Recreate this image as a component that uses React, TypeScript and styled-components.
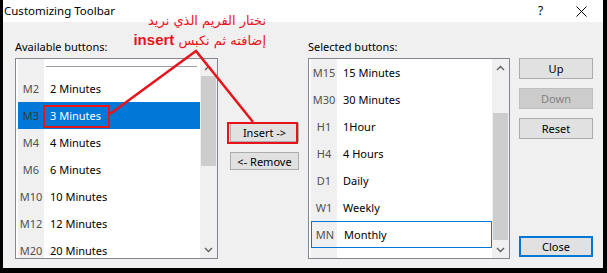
import styled, { createGlobalStyle } from "styled-components";

const GlobalStyle = createGlobalStyle`
  html, body {
    margin: 0;
    padding: 0;
    background: #000;
  }
  body {
    font-family: "Noto Sans", "Liberation Sans", sans-serif;
    font-size: 11px;
    color: #000;
  }
`;

// Window frame
const Frame = styled.div`
  position: relative;
  width: 607px;
  height: 273px;
  box-sizing: border-box;
  padding: 0 4px 5px 3px;
  background: #000;
  display: flex;
  flex-direction: column;
  overflow: hidden;
`;

const TitleBar = styled.div`
  height: 22px;
  flex: none;
  background: #fff;
  display: flex;
  align-items: center;
  padding-left: 1px;
  font-size: 11.5px;
`;

const Title = styled.span`
  flex: 1;
  padding-bottom: 2px;
`;

const Help = styled.span`
  width: 32px;
  font-size: 12px;
  padding-bottom: 2px;
`;

const CloseX = styled.div`
  width: 22px;
  height: 22px;
  margin-right: 11px;
  display: flex;
  align-items: center;
  justify-content: center;
`;

const Body = styled.div`
  flex: 1;
  background: #f0f0f0;
  display: grid;
  grid-template-columns: 203px 72px 202px 74px;
  grid-template-rows: 20px 201px;
  column-gap: 9px;
  padding: 16px 10px 0 12px;
`;

const Label = styled.div<{ $col: number }>`
  grid-column: ${(p) => p.$col};
  grid-row: 1;
  padding-top: 1px;
  line-height: 15px;
`;

// List box
const ListBox = styled.div<{ $col: number }>`
  grid-column: ${(p) => p.$col};
  grid-row: 2;
  border: 1px solid #828790;
  background: #fff;
  display: flex;
  overflow: hidden;
`;

const Viewport = styled.div`
  flex: 1;
  overflow: hidden;
  padding-left: 2px;
  background: linear-gradient(to right, #fff 2px, #f0f0f0 2px, #f0f0f0 28px, #fff 28px);
`;

const Row = styled.div<{ $selected?: boolean; $focused?: boolean }>`
  height: 27px;
  box-sizing: border-box;
  display: grid;
  grid-template-columns: 26px 1fr;
  align-items: center;
  background: ${(p) => (p.$selected ? "#0078d7" : "transparent")};
  border: ${(p) => (p.$focused ? "1px solid #0078d7" : "0")};
`;

const Code = styled.span<{ $selected?: boolean }>`
  text-align: center;
  color: ${(p) => (p.$selected ? "#3a3a3a" : "#505050")};
`;

const Name = styled.span<{ $selected?: boolean }>`
  padding-left: 6px;
  color: ${(p) => (p.$selected ? "#fff" : "#000")};
`;

const SeparatorRow = styled.div`
  height: 16px;
  display: grid;
  grid-template-columns: 26px 1fr;
`;

const SeparatorLine = styled.div`
  margin: 7px 3px 0 2px;
  height: 1px;
  background: #a0a0a0;
`;

const ScrollBar = styled.div`
  width: 17px;
  flex: none;
  background: #f0f0f0;
  display: flex;
  flex-direction: column;
`;

const ArrowBox = styled.div`
  height: 17px;
  flex: none;
  display: flex;
  align-items: center;
  justify-content: center;
`;

const Track = styled.div`
  flex: 1;
  display: flex;
  flex-direction: column;
`;

const Thumb = styled.div<{ $offset: number; $size: number }>`
  margin: ${(p) => p.$offset}px 1px 0 1px;
  height: ${(p) => p.$size}px;
  background: #cdcdcd;
`;

// Buttons
const MidColumn = styled.div`
  grid-column: 2;
  grid-row: 2;
  display: flex;
  flex-direction: column;
  gap: 10px;
  padding: 65px 0 0 3px;
`;

const SideColumn = styled.div`
  grid-column: 4;
  grid-row: 2;
  display: flex;
  flex-direction: column;
  gap: 9px;
  padding-bottom: 2px;
`;

const Button = styled.div<{ $height?: number; $disabled?: boolean; $default?: boolean }>`
  height: ${(p) => p.$height ?? 21}px;
  box-sizing: border-box;
  display: flex;
  align-items: center;
  justify-content: center;
  background: ${(p) => (p.$disabled ? "#cccccc" : "#e1e1e1")};
  border: ${(p) => (p.$default ? "2px solid #0078d7" : p.$disabled ? "1px solid #bfbfbf" : "1px solid #adadad")};
  color: ${(p) => (p.$disabled ? "#838383" : "#000")};
`;

const CloseButton = styled(Button)`
  margin-top: auto;
`;

// Annotation overlay
const Overlay = styled.svg`
  position: absolute;
  left: 0;
  top: 0;
  pointer-events: none;
`;

const Note = styled.div`
  position: absolute;
  left: 120px;
  top: 11px;
  width: 146px;
  direction: rtl;
  text-align: right;
  color: #e8141c;
  font-family: "DejaVu Sans", "Noto Sans", sans-serif;
  font-size: 13px;
  line-height: 19px;
  white-space: nowrap;
`;

const NoteStrong = styled.b`
  font-family: "Liberation Sans", sans-serif;
  font-size: 15px;
`;

type Item = { code: string; name: string; selected?: boolean; focused?: boolean };

const available: Item[] = [
  { code: "M2", name: "2 Minutes" },
  { code: "M3", name: "3 Minutes", selected: true },
  { code: "M4", name: "4 Minutes" },
  { code: "M6", name: "6 Minutes" },
  { code: "M10", name: "10 Minutes" },
  { code: "M12", name: "12 Minutes" },
  { code: "M20", name: "20 Minutes" },
];

const chosen: Item[] = [
  { code: "M15", name: "15 Minutes" },
  { code: "M30", name: "30 Minutes" },
  { code: "H1", name: "1Hour" },
  { code: "H4", name: "4 Hours" },
  { code: "D1", name: "Daily" },
  { code: "W1", name: "Weekly" },
  { code: "MN", name: "Monthly", focused: true },
];

function Chevron({ up }: { up?: boolean }) {
  return (
    <svg width="9" height="6" viewBox="0 0 9 6">
      <path
        d={up ? "M1 5 L4.5 1.5 L8 5" : "M1 1 L4.5 4.5 L8 1"}
        fill="none"
        stroke="#606060"
        strokeWidth="1.4"
      />
    </svg>
  );
}

function Scroller({ offset, size }: { offset: number; size: number }) {
  return (
    <ScrollBar>
      <ArrowBox>
        <Chevron up />
      </ArrowBox>
      <Track>
        <Thumb $offset={offset} $size={size} />
      </Track>
      <ArrowBox>
        <Chevron />
      </ArrowBox>
    </ScrollBar>
  );
}

function Rows({ items }: { items: Item[] }) {
  return (
    <>
      {items.map((it) => (
        <Row key={it.code} $selected={it.selected} $focused={it.focused}>
          <Code $selected={it.selected}>{it.code}</Code>
          <Name $selected={it.selected}>{it.name}</Name>
        </Row>
      ))}
    </>
  );
}

export default function App() {
  return (
    <>
      <GlobalStyle />
      <Frame>
        <TitleBar>
          <Title>Customizing Toolbar</Title>
          <Help>?</Help>
          <CloseX>
            <svg width="11" height="11" viewBox="0 0 11 11">
              <path d="M0.5 0.5 L10.5 10.5 M10.5 0.5 L0.5 10.5" stroke="#000" strokeWidth="1" />
            </svg>
          </CloseX>
        </TitleBar>

        <Body>
          <Label $col={1}>Available buttons:</Label>
          <Label $col={3}>Selected buttons:</Label>

          <ListBox $col={1}>
            <Viewport>
              <SeparatorRow>
                <span />
                <SeparatorLine />
              </SeparatorRow>
              <Rows items={available} />
            </Viewport>
            <Scroller offset={0} size={90} />
          </ListBox>

          <MidColumn>
            <Button $height={19}>Insert -&gt;</Button>
            <Button $height={18}>&lt;- Remove</Button>
          </MidColumn>

          <ListBox $col={3}>
            <Viewport>
              <Rows items={chosen} />
            </Viewport>
            <Scroller offset={37} size={127} />
          </ListBox>

          <SideColumn>
            <Button>Up</Button>
            <Button $disabled>Down</Button>
            <Button>Reset</Button>
            <CloseButton $default>Close</CloseButton>
          </SideColumn>
        </Body>

        <Note>
          نختار الفريم الذي نريد
          <br />
          إضافته ثم نكبس <NoteStrong>insert</NoteStrong>
        </Note>

        <Overlay width="607" height="273" viewBox="0 0 607 273">
          <g stroke="#e8141c" strokeWidth="2.5" fill="none">
            <path d="M110 114 L196 51 L253 122" />
          </g>
          <g stroke="#e8141c" strokeWidth="2" fill="none">
            <rect x="44" y="106" width="65" height="21" />
            <rect x="228" y="123" width="69" height="20" />
          </g>
        </Overlay>
      </Frame>
    </>
  );
}
